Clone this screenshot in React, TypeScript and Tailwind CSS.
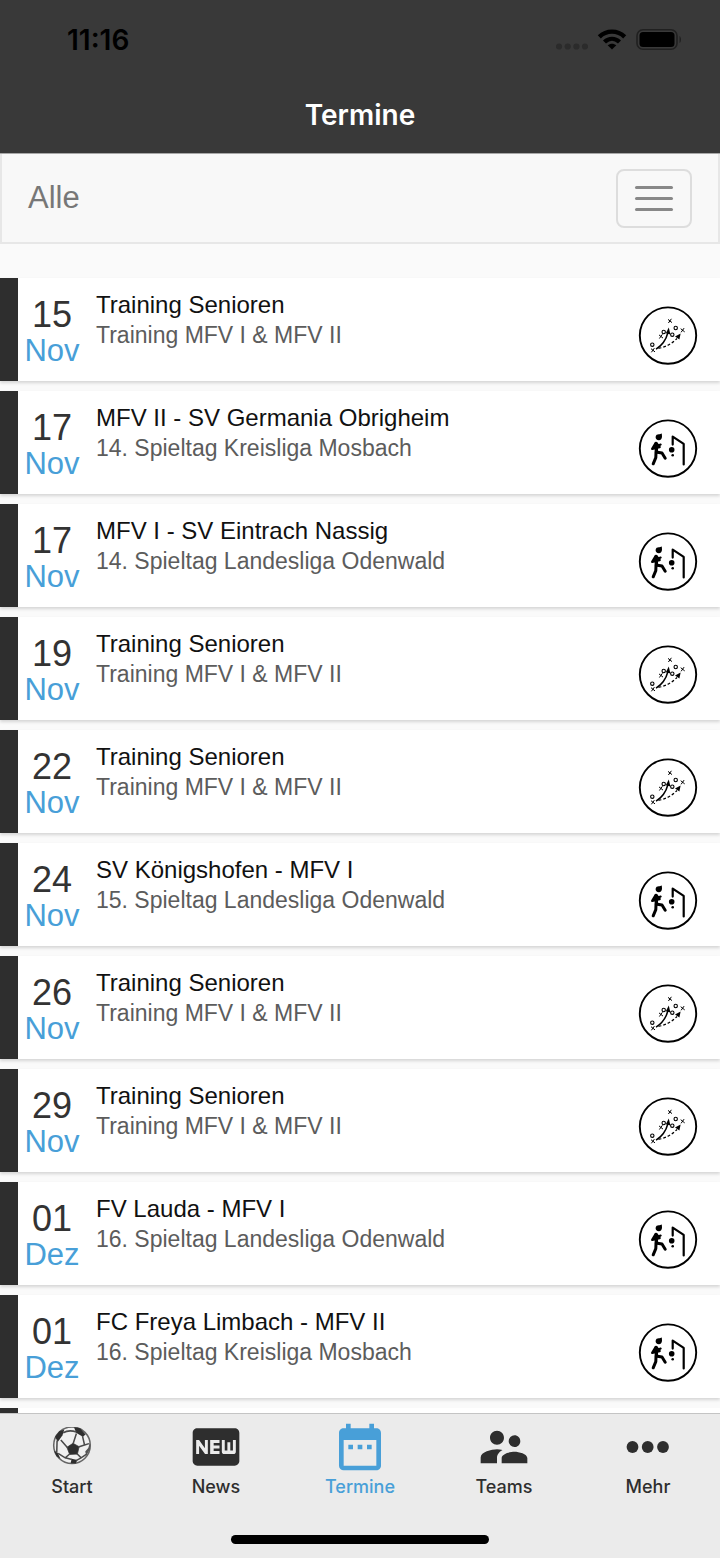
import { useState } from 'react';
import clsx from 'clsx';
import { MdDateRange, MdFiberNew, MdSupervisorAccount } from 'react-icons/md';

type EventKind = 'training' | 'match';

interface ClubEvent {
  day: string;
  month: string;
  title: string;
  subtitle: string;
  kind: EventKind;
}

const events: ClubEvent[] = [
  { day: '15', month: 'Nov', title: 'Training Senioren', subtitle: 'Training MFV I & MFV II', kind: 'training' },
  { day: '17', month: 'Nov', title: 'MFV II - SV Germania Obrigheim', subtitle: '14. Spieltag Kreisliga Mosbach', kind: 'match' },
  { day: '17', month: 'Nov', title: 'MFV I - SV Eintrach Nassig', subtitle: '14. Spieltag Landesliga Odenwald', kind: 'match' },
  { day: '19', month: 'Nov', title: 'Training Senioren', subtitle: 'Training MFV I & MFV II', kind: 'training' },
  { day: '22', month: 'Nov', title: 'Training Senioren', subtitle: 'Training MFV I & MFV II', kind: 'training' },
  { day: '24', month: 'Nov', title: 'SV Königshofen - MFV I', subtitle: '15. Spieltag Landesliga Odenwald', kind: 'match' },
  { day: '26', month: 'Nov', title: 'Training Senioren', subtitle: 'Training MFV I & MFV II', kind: 'training' },
  { day: '29', month: 'Nov', title: 'Training Senioren', subtitle: 'Training MFV I & MFV II', kind: 'training' },
  { day: '01', month: 'Dez', title: 'FV Lauda - MFV I', subtitle: '16. Spieltag Landesliga Odenwald', kind: 'match' },
  { day: '01', month: 'Dez', title: 'FC Freya Limbach - MFV II', subtitle: '16. Spieltag Kreisliga Mosbach', kind: 'match' },
];

/** Tactics board: crosses, circles and two running paths */
function TrainingIcon() {
  const crosses = [[32, 15], [44.7, 24.3], [23, 30.5], [15, 44.3]];
  const rings = [[37.7, 22], [34.3, 28.7], [25.7, 26], [14.3, 38.7]];

  return (
    <svg className="size-15 shrink-0" viewBox="0 0 60 60" fill="none" stroke="black" aria-hidden="true">
      <circle cx="30" cy="29.6" r="28.2" strokeWidth="1.9" />
      {crosses.map(([x, y]) => (
        <path key={`${x}-${y}`} d={`M${x - 2} ${y - 1.6}l4 3.2m-0.6-3.8l-3 4.2`} strokeWidth="1" />
      ))}
      {rings.map(([x, y]) => (
        <circle key={`${x}-${y}`} cx={x} cy={y} r="1.7" strokeWidth="1.1" />
      ))}
      <path d="M18 43.2C23 40 28 34 29.8 27" strokeWidth="1.5" />
      <path d="M30.8 21.6L32.4 28.6L27.8 27.2Z" fill="black" stroke="none" />
      <path d="M20.5 42.4C28 41 34 37.5 39 32.5" strokeWidth="1.2" strokeDasharray="2.8 2" />
      <path d="M42.6 27.6L41.4 33.4L37 30.6Z" fill="black" stroke="none" />
    </svg>
  );
}

/** Player shooting at a goal */
function MatchIcon() {
  return (
    <svg className="size-15 shrink-0" viewBox="0 0 60 60" fill="none" stroke="black" strokeLinecap="round" strokeLinejoin="round" aria-hidden="true">
      <circle cx="30" cy="29.6" r="28.2" strokeWidth="1.9" />
      <path d="M17.6 18C17.8 15.4 19.8 15 21.5 15.2L23.8 14.6L24 17.5C24 20 22.6 21.4 20.8 21.3C18.8 21.2 17.5 19.8 17.6 18Z" fill="black" stroke="none" />
      <path d="M17.8 24L14.2 29.8L21.6 28" strokeWidth="2.4" />
      <path d="M18.2 24L20.6 26.6L22.6 25.6" strokeWidth="2.2" />
      <path d="M18.2 24.6L18.4 33" strokeWidth="3.4" />
      <path d="M18 33.6L17.8 38.6L15.2 44.8" strokeWidth="3" />
      <path d="M19.4 33.2L24 34L27.2 39.2" strokeWidth="3" />
      <circle cx="33.7" cy="30.8" r="2.8" fill="black" stroke="none" />
      <circle cx="34.7" cy="36.2" r="1.3" fill="black" stroke="none" />
      <path d="M34.7 25.6V17.6L45.7 24.8V45.4" strokeWidth="2.2" />
    </svg>
  );
}

function FootballIcon() {
  return (
    <svg className="size-10" viewBox="11 14 118 118" fill="none" stroke="#4a4a4a" strokeWidth="4.5" aria-hidden="true">
      <circle cx="70" cy="68" r="54" fill="#f0f0f0" stroke="#666" />
      <path d="M55 74L73 62L91 72L86 94L63 95Z" fill="#2e2e2e" stroke="#2e2e2e" strokeWidth="2" />
      <path d="M76 15L94 18L110 36L102 43L82 31Z" fill="#2e2e2e" stroke="none" />
      <path d="M20 43L33 26L47 22L42 38L28 58Z" fill="#2e2e2e" stroke="none" />
      <path d="M17 83L28 91L36 108L24 100Z" fill="#2e2e2e" stroke="none" />
      <path d="M123 60L118 76L109 86L112 98L123 80Z" fill="#555" stroke="none" />
      <path d="M69 108L86 111L81 122L66 121Z" fill="#2e2e2e" stroke="none" />
      <path d="M57 75L37 52M73 64L83 33M89 73L107 67L101 41M107 67L120 63M84 92L97 105L113 94M97 105L82 113M64 93L50 105L29 92M50 105L70 110M26 54L25 90M44 31C56 24 67 23 83 29" />
    </svg>
  );
}

function MoreIcon() {
  return (
    <svg className="w-11 h-14" viewBox="0 0 44 56" fill="currentColor" aria-hidden="true">
      <circle cx="6.5" cy="28" r="5.9" />
      <circle cx="21.7" cy="28" r="5.9" />
      <circle cx="37" cy="28" r="5.9" />
    </svg>
  );
}

const tabs = [
  { label: 'Start', icon: <FootballIcon /> },
  { label: 'News', icon: <MdFiberNew className="size-14" /> },
  { label: 'Termine', icon: <MdDateRange className="size-14" /> },
  { label: 'Teams', icon: <MdSupervisorAccount className="size-14" /> },
  { label: 'Mehr', icon: <MoreIcon /> },
];

function StatusBar() {
  return (
    <div className="flex h-20 items-center justify-between pl-[67px] pr-9 text-black">
      <span className="text-[28px] font-semibold">11:16</span>
      <div className="flex items-center gap-2">
        <svg className="w-8 h-6" viewBox="0 0 32 24" fill="#2b2b2b" aria-hidden="true">
          <circle cx="3" cy="18.5" r="3.1" />
          <circle cx="11.7" cy="18.5" r="3.1" />
          <circle cx="20.4" cy="18.5" r="3.1" />
          <circle cx="29" cy="18.5" r="3.1" />
        </svg>
        <svg className="w-8 h-6" viewBox="0 0 32 24" aria-hidden="true">
          <path d="M3.3 8.8C10.5 1.9 21.5 1.9 28.7 8.8" fill="none" stroke="black" strokeWidth="4.4" />
          <path d="M8.5 14C13 9.8 19 9.8 23.5 14" fill="none" stroke="black" strokeWidth="4.4" />
          <path d="M16 21.5L11.7 17.3C14.2 15.1 17.8 15.1 20.3 17.3Z" />
        </svg>
        <svg className="w-12 h-6" viewBox="0 0 48 24" aria-hidden="true">
          <rect x="1" y="1.7" width="40" height="19.6" rx="6" fill="none" stroke="#202020" strokeWidth="1.6" />
          <rect x="3.5" y="4" width="35" height="15" rx="3.5" />
          <path d="M43.5 8C45.5 9 45.5 14 43.5 15Z" fill="#202020" />
        </svg>
      </div>
    </div>
  );
}

function EventCard({ event }: { event: ClubEvent }) {
  return (
    <li className="flex h-[103px] shrink-0 border-l-[18px] border-[#2e2e2e] bg-white pr-[22px] shadow-[0_2px_3px_rgba(0,0,0,0.15)]">
      <div className="flex w-[68px] shrink-0 flex-col items-center pt-[19px]">
        <span className="text-4xl leading-9 text-[#333]">{event.day}</span>
        <span className="text-[31px] leading-9 text-[#489fd8]">{event.month}</span>
      </div>
      <div className="min-w-0 flex-1 pl-[10px] pt-3">
        <h2 className="text-2xl leading-[30px] text-[#111]">{event.title}</h2>
        <p className="text-[23px] leading-[30px] text-[#5c5c5c]">{event.subtitle}</p>
      </div>
      <div className="flex items-center pt-3">
        {event.kind === 'training' ? <TrainingIcon /> : <MatchIcon />}
      </div>
    </li>
  );
}

export default function App() {
  const [activeTab, setActiveTab] = useState('Termine');

  return (
    <div className="flex h-screen flex-col bg-[#fafafa] font-['Liberation_Sans',sans-serif]">
      <header className="shrink-0 border-b border-[#a8a8a8] bg-[#393939] pb-[18px] font-['Inter',sans-serif]">
        <StatusBar />
        <h1 className="pt-[15px] text-center text-[28px] leading-10 font-semibold text-white">Termine</h1>
      </header>

      <nav className="flex h-[90px] shrink-0 items-center justify-between border-2 border-t-0 border-[#e7e7e7] bg-[#f8f8f8] px-[26px]">
        <a href="#alle" className="text-[31px] leading-10 text-[#777]">Alle</a>
        <button
          type="button"
          aria-label="Menü"
          className="flex h-[59px] w-19 flex-col items-center justify-center gap-2 rounded-lg border-2 border-[#ddd]"
        >
          <span className="h-[3px] w-[38px] rounded-sm bg-[#888]" />
          <span className="h-[3px] w-[38px] rounded-sm bg-[#888]" />
          <span className="h-[3px] w-[38px] rounded-sm bg-[#888]" />
        </button>
      </nav>

      <main className="min-h-0 flex-1 overflow-hidden pt-[34px]">
        <ul className="flex flex-col gap-[10px]">
          {events.map((event, i) => (
            <EventCard key={i} event={event} />
          ))}
          {/* Next entry, scrolled out below the tab bar */}
          <li className="h-[103px] shrink-0 border-l-[18px] border-[#2e2e2e] bg-white" />
        </ul>
      </main>

      <footer className="shrink-0 border-t border-[#c4c4c4] bg-[#ebebeb] pb-[14px] font-['Inter',sans-serif]">
        <div className="grid grid-cols-5 pt-[5px]">
          {tabs.map(({ label, icon }) => (
            <button
              key={label}
              type="button"
              onClick={() => setActiveTab(label)}
              className={clsx(
                'flex flex-col items-center',
                activeTab === label ? 'text-[#489fd8]' : 'text-[#2e2e2e]'
              )}
            >
              <span className="flex h-14 items-center">{icon}</span>
              <span className="text-lg leading-6 font-medium">{label}</span>
            </button>
          ))}
        </div>
        <div className="mx-auto mt-9 h-[9px] w-[258px] rounded-full bg-black" />
      </footer>
    </div>
  );
}
